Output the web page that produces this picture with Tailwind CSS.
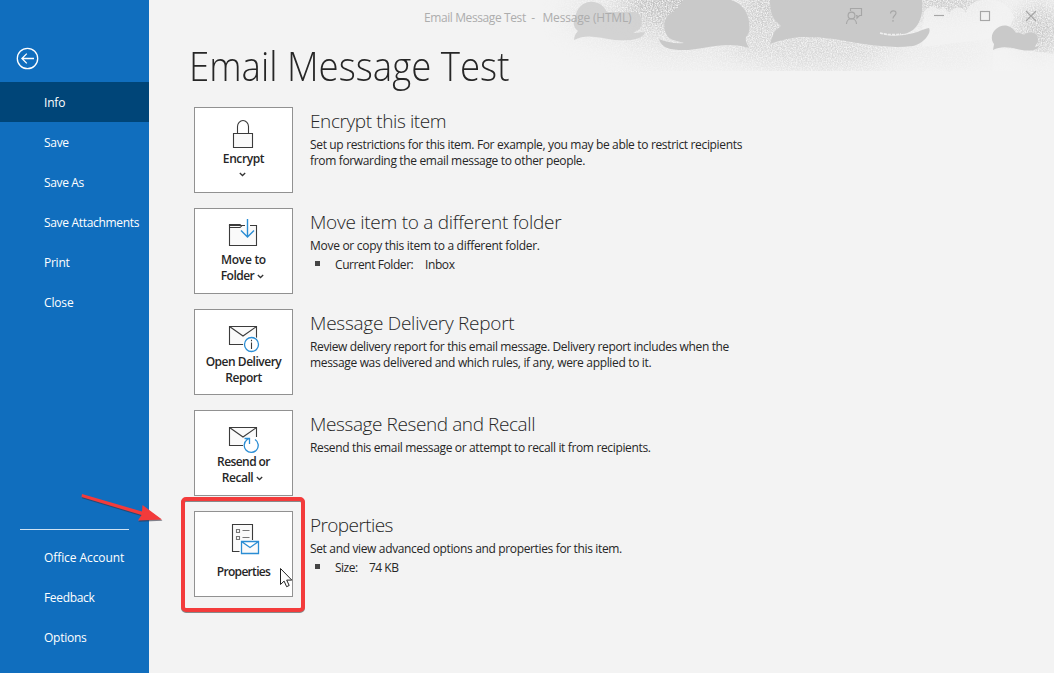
<!DOCTYPE html>
<html lang="en">
<head>
<meta charset="utf-8">
<title>Email Message Test - Message (HTML)</title>
<script src="https://cdn.jsdelivr.net/npm/@tailwindcss/browser@4"></script>
</head>
<body class="w-[1054px] h-[673px] overflow-hidden bg-[#f3f3f3] font-['Open_Sans','Noto_Sans',sans-serif] text-[12px] leading-[16px] text-[#262626]">
<div class="relative flex w-[1054px] h-[673px]">
  <nav class="flex w-[149px] shrink-0 flex-col bg-[#106ebe] text-white whitespace-nowrap">
    <div class="h-[82px] pl-[16px] pt-[47px]">
      <svg class="block" width="23" height="23" viewBox="0 0 23 23" fill="none" stroke="#fff" stroke-width="1.3"><circle cx="11.5" cy="11.5" r="10.2"/><path d="M18 11.5H6M10.8 6.6 5.9 11.5l4.9 4.9"/></svg>
    </div>
    <a class="flex h-10 items-center bg-[#004578] pl-[44px] pt-[2px] tracking-[-0.2px]">Info</a>
    <a class="flex h-10 items-center pl-[44px] pt-[2px] tracking-[-0.3px]">Save</a>
    <a class="flex h-10 items-center pl-[44px] pt-[2px] tracking-[-0.35px]">Save As</a>
    <a class="flex h-10 items-center pl-[44px] pt-[2px] tracking-[-0.32px]">Save Attachments</a>
    <a class="flex h-10 items-center pl-[44px] pt-[2px] tracking-[-0.25px]">Print</a>
    <a class="flex h-10 items-center pl-[44px] pt-[2px] tracking-[-0.15px]">Close</a>
    <div class="mx-5 mt-auto mb-2 h-px bg-[#cfe2f3]"></div>
    <a class="flex h-10 items-center pl-[44px] tracking-[-0.08px]">Office Account</a>
    <a class="flex h-10 items-center pl-[44px] tracking-[-0.32px]">Feedback</a>
    <a class="mb-[15px] flex h-10 items-center pl-[44px] tracking-[-0.25px]">Options</a>
  </nav>

  <main class="relative flex-1">
    <!-- decorative speech bubble banner, x origin at 540 -->
    <svg class="absolute left-[391px] top-0" width="514" height="71" viewBox="540 0 514 71">
      <defs>
        <filter id="grain" x="0" y="0" width="1" height="1" color-interpolation-filters="sRGB">
          <feTurbulence type="fractalNoise" baseFrequency="0.8" numOctaves="3" seed="4" result="n"/>
          <feColorMatrix in="n" type="matrix" values="0 0 0 0 0  0 0 0 0 0  0 0 0 0 0  0 0 0 2.4 -0.6" result="a"/>
          <feComposite in="SourceGraphic" in2="a" operator="in"/>
        </filter>
        <filter id="soft" x="-60%" y="-100%" width="220%" height="300%" color-interpolation-filters="sRGB"><feGaussianBlur stdDeviation="12"/></filter>
        <mask id="fade" maskUnits="userSpaceOnUse" x="540" y="0" width="514" height="71"><g filter="url(#soft)"><ellipse cx="625" cy="15" rx="60" ry="26" fill="#484848"/><ellipse cx="670" cy="0" rx="46" ry="30" fill="#fff"/><ellipse cx="710" cy="45" rx="90" ry="18" fill="#3c3c3c"/><ellipse cx="765" cy="10" rx="28" ry="34" fill="#ccc"/><ellipse cx="820" cy="45" rx="95" ry="24" fill="#888"/><ellipse cx="930" cy="50" rx="60" ry="10" fill="#333"/><ellipse cx="945" cy="0" rx="50" ry="18" fill="#ddd"/><ellipse cx="1040" cy="30" rx="26" ry="26" fill="#ddd"/></g></mask>
      </defs>
      <g mask="url(#fade)"><rect x="540" y="0" width="514" height="71" fill="#bebebe" filter="url(#grain)"/></g>
      <path d="M924 12c3-6 11-8 15-2 4-4 8-2 10 5 2-9 14-10 17-2C968-4 1006-8 1014 17l-8 20-84 10z" fill="#f3f3f3" opacity=".75"/>
      <path d="M574 40c0-4 2-7 4-9-5-3-5-10-3-13C578-2 600-3 607 12h28c9 2 9 17 1 19l-3 2 12-1c-2 8-16 9-30 8-15-2-28-7-41 0z" fill="#d0d0d0" opacity=".92"/>
      <path d="M749 48c-2-4-4-8-3-11 3-3 4-7 3-16C747 8 738 2 731 0h-48c-3 5-8 12-13 14-8 4-8 22 3 26l11 3c-8 1-18-1-25-4 2 9 12 11 24 11 20 0 44-10 66-2z" fill="#c9c9c9"/>
      <path d="M770 0h152c2 16-4 33-20 34-7 2-14 1-21-1 8 4 19 3 28 1 8-1 14-5 20-6 3 5-6 16-16 18-55 6-92-21-143-2 1-5 3-9 5-13l6-5-7-7c-3-5-4-11-4-19z" fill="#c9c9c9"/>
      <path d="M880 33c7 2 15 2 21 1" stroke="#eee" stroke-width="1.6" stroke-dasharray="3 1" fill="none"/>
      <path d="M993 52c20-7 40 0 61 2v17H993z" fill="#f3f3f3" opacity=".7"/>
      <path d="M993 50l1-6c-9-12 12-28 22-11 4-1 6 1 8 2 4-5 14-3 14 4 0 5-3 6-3 8l4-1c-2 6-16 5-22 3-8-2-17-3-24 1z" fill="#c9c9c9"/>
    </svg>

    <header class="relative flex h-[36px] items-center pl-[275px] text-[#adadad]">
      <div class="flex whitespace-pre"><span class="w-[118.500px] tracking-[-0.4px]">Email Message Test  -</span><span class="tracking-[-0.2px]">Message (HTML)</span></div>
    </header>
    <svg class="absolute left-[690px] top-0" width="215" height="34" viewBox="839 0 215 34" fill="none" stroke="#a6a6a6" stroke-width="1.150">
      <circle cx="851.5" cy="15.500" r="3.400"/><path d="M846.500 24c0-7 10-7 10 0M850.500 11V8.500h11v7h-2l-2.500 2.500v-2.500h-1"/>
      <path d="M890.500 13.500c0-3.500 5.500-3.500 5.500-.5 0 2.500-3 2.500-3 5.500M893 20v1.800"/>
      <path d="M934 15.500h10"/><rect x="980.500" y="11.500" width="9" height="9"/><path d="M1026 11l10 10M1036 11l-10 10"/>
    </svg>

    <h1 class="ml-[40px] h-[71px] w-[351px] origin-left scale-x-[0.915] pt-[4px] text-[40px] leading-[52px] font-light whitespace-nowrap">Email Message Test</h1>

    <div class="ml-[45px] flex flex-col gap-[15px]">
      <section class="flex h-[86px]">
        <button class="flex w-[99px] shrink-0 flex-col items-center border border-[#919191] bg-white font-semibold tracking-[-0.4px]">
          <svg class="mt-[11px] mr-[1px] block" width="24" height="32" viewBox="0 0 24 32" fill="none" stroke="#3b3b3b" stroke-width="1.100"><path d="M6.500 14V7.500a5.500 6 0 0 1 11 0V14"/><path d="M2.500 14.500h19v14h-19z" fill="#fafafa"/></svg>
          <span>Encrypt</span>
          <svg class="mt-[5px] mr-[2px] block" width="7" height="5" viewBox="0 0 7 5" fill="none" stroke="#333" stroke-width="1.300"><path d="M.8 1l2.700 2.500L6.200 1"/></svg>
        </button>
        <div class="ml-[17px] whitespace-nowrap">
          <h2 class="h-[30px] text-[19px] leading-[28px] font-light tracking-[-0.4px]">Encrypt this item</h2>
          <p class="tracking-[-0.34px]">Set up restrictions for this item. For example, you may be able to restrict recipients<br>from forwarding the email message to other people.</p>
        </div>
      </section>
      <section class="flex h-[86px]">
        <button class="flex w-[99px] shrink-0 flex-col items-center border border-[#919191] bg-white font-semibold">
          <svg class="mt-[10px] mr-[1px] block" width="30" height="29" viewBox="0 0 30 29" fill="none" stroke="#3b3b3b" stroke-width="1.100"><path d="M1.500 6.500h27v20h-27z" fill="#fafafa"/><path d="M1.500 7V5.500h10.500l1.500 1.500-1.500 1.500H1.500"/><path d="M17 6.500h5" stroke="#fff" stroke-width="2.500"/><path d="M19.500 0v17.500M13 11.500l6.500 6.500 6.500-6.500" stroke="#2a8dd4" stroke-width="1.400"/></svg>
          <span class="mt-[4px] tracking-[-0.3px]">Move to</span>
          <span class="mr-[2px] flex items-center gap-[3px] tracking-[-0.5px]">Folder<svg class="block" width="7" height="5" viewBox="0 0 7 5" fill="none" stroke="#333" stroke-width="1.300"><path d="M.8 1l2.700 2.500L6.200 1"/></svg></span>
        </button>
        <div class="ml-[17px] whitespace-nowrap">
          <h2 class="h-[30px] text-[19px] leading-[28px] font-light tracking-[-0.28px]">Move item to a different folder</h2>
          <p class="tracking-[-0.29px]">Move or copy this item to a different folder.</p>
          <p class="mt-[3px] flex"><i class="mt-[4px] ml-[5px] mr-[15px] block size-[5px] bg-[#444]"></i><span class="w-[90px] tracking-[-0.43px]">Current Folder:</span><span class="tracking-[-0.4px]">Inbox</span></p>
        </div>
      </section>
      <section class="flex h-[86px]">
        <button class="flex w-[99px] shrink-0 flex-col items-center border border-[#919191] bg-white font-semibold tracking-[-0.48px]">
          <svg class="mt-[15px] block" width="32" height="28" viewBox="0 0 32 28" fill="none" stroke="#3b3b3b" stroke-width="1.100"><path d="M1.500 1.500h27v18h-27z" fill="#fafafa"/><path d="M1.500 1.500l13.500 9.500 13.500-9.500"/><circle cx="23.500" cy="19.500" r="8.500" fill="#fff" stroke="none"/><circle cx="23.500" cy="19.500" r="7" stroke="#2a8dd4" stroke-width="1.300"/><path d="M23.500 17.500v6.500M23.500 14.800v1.500"/></svg>
          <span class="mt-px">Open Delivery</span>
          <span>Report</span>
        </button>
        <div class="ml-[17px] whitespace-nowrap">
          <h2 class="h-[30px] text-[19px] leading-[28px] font-light tracking-[-0.26px]">Message Delivery Report</h2>
          <p><span class="tracking-[-0.365px]">Review delivery report for this email message. Delivery report includes when the</span><br><span class="tracking-[-0.335px]">message was delivered and which rules, if any, were applied to it.</span></p>
        </div>
      </section>
      <section class="flex h-[86px]">
        <button class="flex w-[99px] shrink-0 flex-col items-center border border-[#919191] bg-white font-semibold tracking-[-0.58px]">
          <svg class="mt-[15px] block" width="32" height="28" viewBox="0 0 32 28" fill="none" stroke="#3b3b3b" stroke-width="1.100"><path d="M1.500 1.500h27v18h-27z" fill="#fafafa"/><path d="M1.500 1.500l13.500 9.500 13.500-9.500"/><path d="M15 21a8.500 8.500 0 0 0 16.500 2V11h-8l-8.500 2z" fill="#fff" stroke="none"/><path d="M27 13.500a7 7 0 1 1-8 .3l2.500-1.500M16.500 12.500h5v5.500" stroke="#2a8dd4" stroke-width="1.300"/></svg>
          <span>Resend or</span>
          <span class="mr-[2px] flex items-center gap-[3px] tracking-[-0.48px]">Recall<svg class="block" width="7" height="5" viewBox="0 0 7 5" fill="none" stroke="#333" stroke-width="1.300"><path d="M.8 1l2.700 2.500L6.200 1"/></svg></span>
        </button>
        <div class="ml-[17px] whitespace-nowrap">
          <h2 class="h-[30px] text-[19px] leading-[28px] font-light tracking-[-0.41px]">Message Resend and Recall</h2>
          <p class="tracking-[-0.35px]">Resend this email message or attempt to recall it from recipients.</p>
        </div>
      </section>
      <section class="flex h-[86px]">
        <button class="flex w-[99px] shrink-0 flex-col items-center border border-[#919191] bg-white font-semibold tracking-[-0.68px]">
          <svg class="mt-[11px] ml-[2px] block" width="30" height="32" viewBox="0 0 30 32" fill="none" stroke="#3b3b3b" stroke-width="1.100"><path d="M10 28.500H2.500v-27h20V18" fill="#fafafa"/><path d="M6.500 6.500h3v3h-3zM6.500 13.500h3v3h-3zM12.500 7.500h7M12.500 14.500h7" stroke="#777"/><path d="M9.500 17h20v15h-20z" fill="#fff" stroke="none"/><path d="M11.500 18.500h17v12h-17zM11.500 18.500l8.500 6 8.500-6" stroke="#2a8dd4" stroke-width="1.300" fill="#fafafa"/></svg>
          <span class="mt-[9px]">Properties</span>
        </button>
        <div class="ml-[17px] whitespace-nowrap">
          <h2 class="h-[30px] text-[19px] leading-[28px] font-light tracking-[-0.6px]">Properties</h2>
          <p class="tracking-[-0.35px]">Set and view advanced options and properties for this item.</p>
          <p class="mt-[3px] flex tracking-[-0.5px]"><i class="mt-[4px] ml-[5px] mr-[15px] block size-[5px] bg-[#444]"></i><span class="w-[34px]">Size:</span><span>74 KB</span></p>
        </div>
      </section>
    </div>
  </main>

  <!-- annotation overlay -->
  <svg class="pointer-events-none absolute left-0 top-0" width="320" height="673" viewBox="0 0 320 673">
    <rect x="183" y="500" width="120" height="111" rx="3" fill="none" stroke="#888" stroke-width="4"/>
    <rect x="183" y="499" width="120" height="111" rx="3" fill="none" stroke="#f33b3b" stroke-width="4"/>
    <path d="M82 494l60 17.500.500-6.500 19.500 14.500-24 1 3.500-5.500-60-18z" fill="#334" opacity=".6" transform="translate(.5 1.200)"/>
    <path d="M82 494l60 17.500.500-6.500 19.500 14.500-24 1 3.500-5.500-60-18z" fill="#f33b3b"/>
    <path d="M280.500 568.500v16l3.600-3.400 2.500 5.600 2.600-1.200-2.500-5.400h5.100z" fill="#fff" stroke="#222" stroke-width="1"/>
  </svg>
</div>
</body>
</html>
